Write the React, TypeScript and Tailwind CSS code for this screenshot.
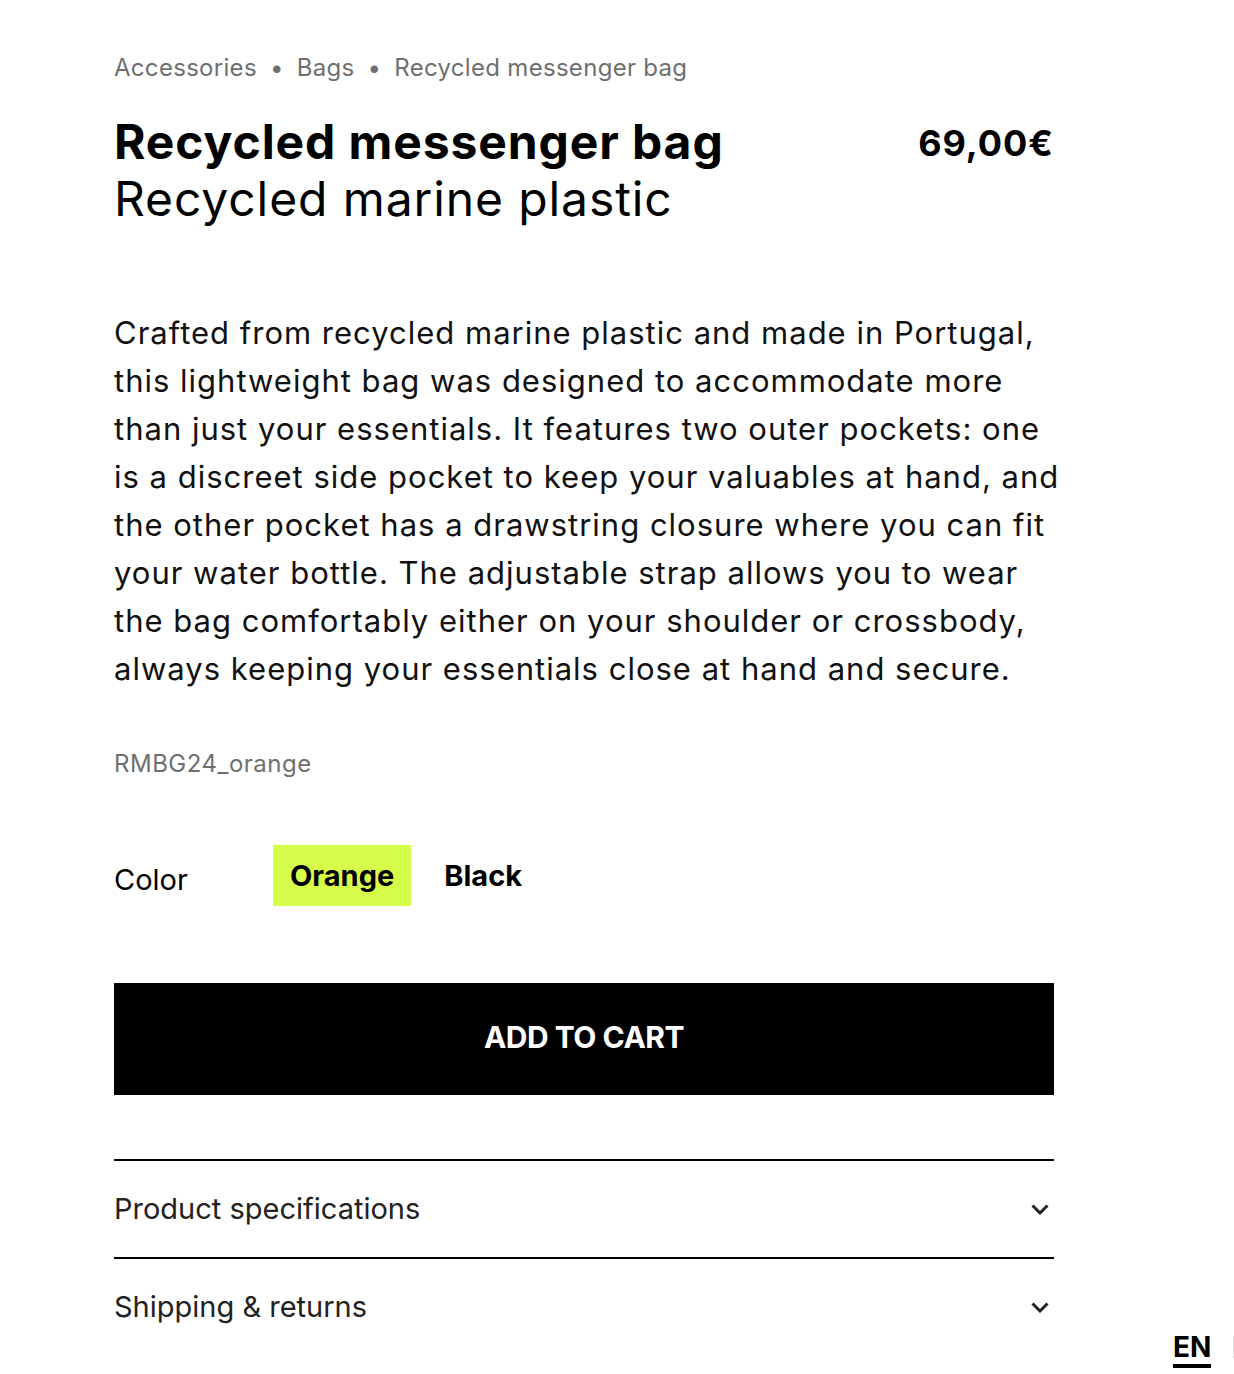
import React from "react";

function Chevron() {
  return (
    <svg width="20" height="12" viewBox="0 0 20 12" fill="none" className="mr-[4px] text-[#222]">
      <path d="M2.5 2.5l7.5 7.5 7.5-7.5" stroke="currentColor" strokeWidth="3" />
    </svg>
  );
}

const lines = [
  "Crafted from recycled marine plastic and made in Portugal,",
  "this lightweight bag was designed to accommodate more",
  "than just your essentials. It features two outer pockets: one",
  "is a discreet side pocket to keep your valuables at hand, and",
  "the other pocket has a drawstring closure where you can fit",
  "your water bottle. The adjustable strap allows you to wear",
  "the bag comfortably either on your shoulder or crossbody,",
  "always keeping your essentials close at hand and secure.",
];

export default function App() {
  return (
    <div className="relative min-h-[1374px] bg-white text-black" style={{ fontFamily: "Inter, 'Noto Sans', sans-serif" }}>
      <div className="w-[940px] ml-[114px] pt-[52px]">
        <nav className="flex items-center text-[24px] leading-[32px] tracking-[0.3px] text-[#6f6f6f]">
          <span>Accessories</span>
          <span className="mx-[13px]">•</span>
          <span>Bags</span>
          <span className="mx-[13px]">•</span>
          <span>Recycled messenger bag</span>
        </nav>
        <div className="mt-[29px] flex justify-between">
          <div>
            <h1 className="text-[48px] leading-[57px] font-bold tracking-[0.9px]">Recycled messenger bag</h1>
            <p className="text-[48px] leading-[57px] tracking-[0.9px]">Recycled marine plastic</p>
          </div>
          <div className="pt-[2px] text-[36px] leading-[57px] font-bold tracking-[1px]">69,00€</div>
        </div>
        <p className="mt-[82px] text-[31px] leading-[48px] tracking-[1px] text-[#111]">
          {lines.map((l, i) => (
            <span key={i} className="block whitespace-nowrap">{l}</span>
          ))}
        </p>
        <div className="mt-[55px] text-[24px] leading-[32px] tracking-[0.5px] text-[#6f6f6f]">RMBG24_orange</div>
        <div className="mt-[65px] flex items-center">
          <span className="w-[159px] text-[29px] leading-[40px] pt-[8px]">Color</span>
          <span className="h-[61px] px-[17px] flex items-center bg-[#d7fd4b] text-[29px] font-bold">Orange</span>
          <span className="ml-[16px] h-[61px] px-[17px] flex items-center text-[29px] font-bold">Black</span>
        </div>
        <button className="mt-[77px] w-full h-[112px] pb-[4px] bg-black text-white text-[30px] font-bold tracking-[-0.5px]">ADD TO CART</button>
        <div className="mt-[64px] border-t-2 border-black">
          <div className="h-[96px] flex items-center justify-between text-[29px] text-[#222]">
            <span>Product specifications</span>
            <Chevron />
          </div>
        </div>
        <div className="border-t-2 border-black">
          <div className="h-[96px] flex items-center justify-between text-[29px] text-[#222]">
            <span>Shipping &amp; returns</span>
            <Chevron />
          </div>
        </div>
      </div>
      <div className="absolute left-[1173px] top-[1330px] flex items-start">
        <span className="text-[28px] leading-[34px] font-bold border-b-4 border-black">EN</span>
        <span className="ml-[22px] mt-[6px] w-[3px] h-[22px] bg-[#ddd]" />
      </div>
    </div>
  );
}
